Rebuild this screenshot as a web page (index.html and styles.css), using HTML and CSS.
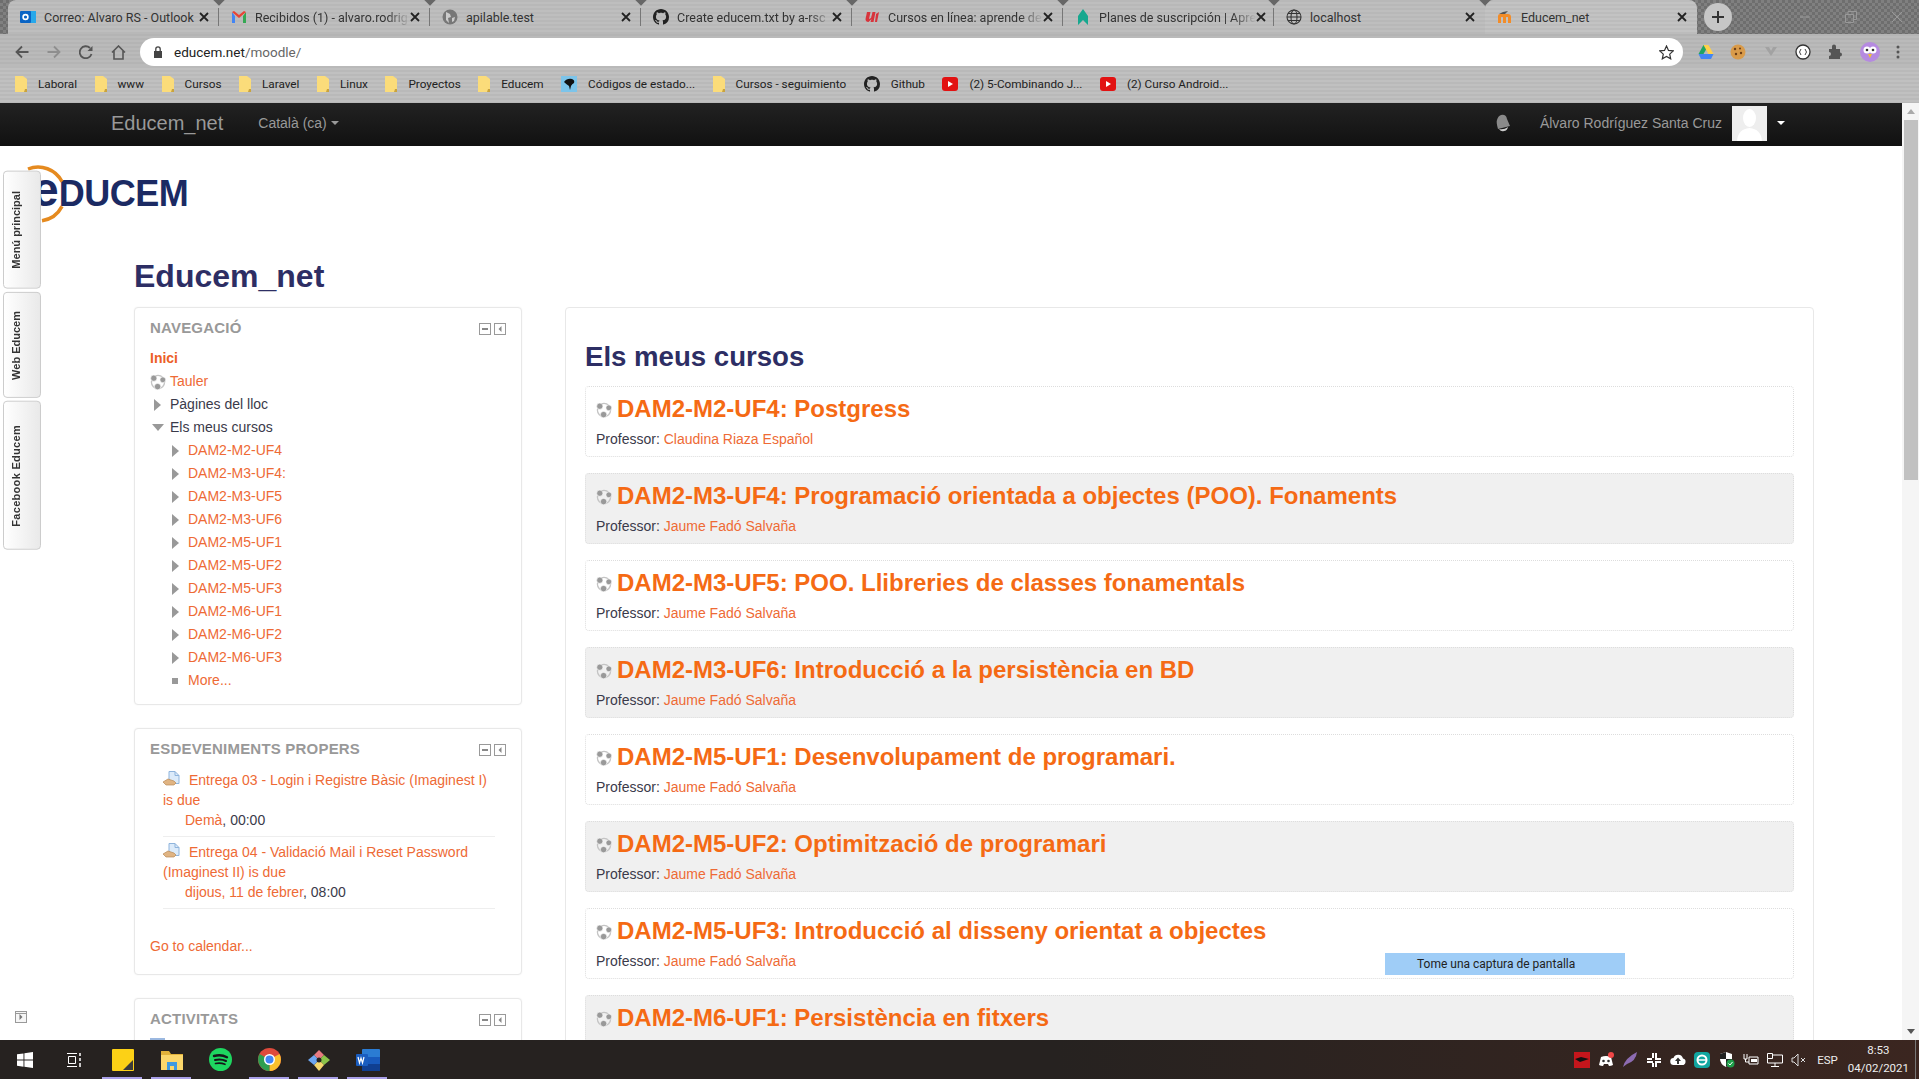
FILE: index.html
```html
<!DOCTYPE html>
<html>
<head>
    <meta charset="UTF-8">
    <title>Educem_net</title>
    <link rel="stylesheet" href="styles.css">
</head>
<body>
    <!-- shared icons -->
    <svg class="defs">
        <symbol id="i-folder" viewBox="0 0 12 16"><path d="M0 0h8l4 3v13H0z" fill="#fbdc7a"/><path d="M10 13h2v3h-3z" fill="#c9a33e"/></symbol>
        <symbol id="i-course" viewBox="0 0 16 16"><circle cx="8" cy="8" r="6.600" fill="none" stroke="#c4c4c4" stroke-width="1.300"/><g fill="#999" stroke="#fff" stroke-width=".6"><circle cx="3.800" cy="4.200" r="3.100"/><circle cx="12.800" cy="5.800" r="2.900"/><circle cx="7.600" cy="12.600" r="3.200"/></g></symbol>
        <symbol id="i-close" viewBox="0 0 10 10"><path d="M1 1l8 8M9 1l-8 8" stroke="#222" stroke-width="1.8"/></symbol>
        <symbol id="i-min" viewBox="0 0 12 12"><rect x=".5" y=".5" width="11" height="11" fill="#fff" stroke="#999"/><rect x="3" y="5" width="6" height="2" fill="#888"/></symbol>
        <symbol id="i-dock" viewBox="0 0 12 12"><rect x=".5" y=".5" width="11" height="11" fill="#fff" stroke="#999"/><path d="M7.5 3L4.5 6l3 3z" fill="#888"/></symbol>
        <symbol id="i-assign" viewBox="0 0 18 16"><path d="M6 .5h6l4 4v8H6z" fill="#dcebfa" stroke="#8fb4dc"/><path d="M12 .5v4h4" fill="none" stroke="#8fb4dc"/><path d="M0 11l5-3 6 2 2 2-2 2H3z" fill="#e0b483" stroke="#b98a58" stroke-width=".7"/></symbol>
        <symbol id="i-yt" viewBox="0 0 16 14"><rect width="16" height="14" rx="3" fill="#e21212"/><path d="M6 4l5 3-5 3z" fill="#fff"/></symbol>
        <symbol id="i-github" viewBox="0 0 16 16"><path fill="#222" d="M8 0C3.58 0 0 3.58 0 8c0 3.54 2.29 6.53 5.47 7.59.4.07.55-.17.55-.38 0-.19-.01-.82-.01-1.49-2.01.37-2.53-.49-2.69-.94-.09-.23-.48-.94-.82-1.13-.28-.15-.68-.52-.01-.53.63-.01 1.08.58 1.23.82.72 1.21 1.87.87 2.33.66.07-.52.28-.87.51-1.07-1.78-.2-3.64-.89-3.64-3.95 0-.87.31-1.59.82-2.15-.08-.2-.36-1.02.08-2.12 0 0 .67-.21 2.2.82.64-.18 1.32-.27 2-.27.68 0 1.36.09 2 .27 1.53-1.04 2.2-.82 2.2-.82.44 1.1.16 1.92.08 2.12.51.56.82 1.27.82 2.15 0 3.07-1.87 3.75-3.65 3.95.29.25.54.73.54 1.48 0 1.07-.01 1.93-.01 2.2 0 .21.15.46.55.38A8.013 8.013 0 0016 8c0-4.42-3.58-8-8-8z"/></symbol>
    </svg>

    <div class="tabstrip">
        <div class="tab">
            <svg class="favicon" viewBox="0 0 16 16"><rect x="5" y="2" width="11" height="12" fill="#28a8ea"/><rect y="2" width="11" height="12" rx="1" fill="#0a64c4"/><circle cx="5.5" cy="8" r="2.4" fill="none" stroke="#fff" stroke-width="1.6"/></svg>
            <span class="tab-title">Correo: Alvaro RS - Outlook</span>
            <svg class="tab-x"><use href="#i-close"/></svg>
        </div>
        <div class="tab">
            <svg class="favicon" viewBox="0 0 16 16"><path d="M1 3v11h3V7z" fill="#4285f4"/><path d="M15 3v11h-3V7z" fill="#34a853"/><path d="M1 3l7 6 7-6-2-1-5 4-5-4z" fill="#ea4335"/></svg>
            <span class="tab-title tab-fade">Recibidos (1) - alvaro.rodrig</span>
            <svg class="tab-x"><use href="#i-close"/></svg>
        </div>
        <div class="tab">
            <svg class="favicon" viewBox="0 0 16 16"><circle cx="8" cy="8" r="7.5" fill="#777"/><path d="M4 3l4 2 1 3-3 1 1 5-3-3zM10 9l3-1-1 4-2 1z" fill="#ccc"/></svg>
            <span class="tab-title">apilable.test</span>
            <svg class="tab-x"><use href="#i-close"/></svg>
        </div>
        <div class="tab">
            <svg class="favicon"><use href="#i-github"/></svg>
            <span class="tab-title tab-fade">Create educem.txt by a-rsc</span>
            <svg class="tab-x"><use href="#i-close"/></svg>
        </div>
        <div class="tab">
            <svg class="favicon" viewBox="0 0 16 16"><path d="M3 3L1.500 10q0 3 3 3l3-3-1 3h3l2-10-3 0-1.500 6-2 1 1.500-7zM12 5l3-2-2 10h-2z" fill="#d8343c"/></svg>
            <span class="tab-title tab-fade">Cursos en línea: aprende de</span>
            <svg class="tab-x"><use href="#i-close"/></svg>
        </div>
        <div class="tab">
            <svg class="favicon" viewBox="0 0 16 16"><path d="M8 0l5 7v9l-5-5-5 5V7z" fill="#17a88f"/></svg>
            <span class="tab-title tab-fade">Planes de suscripción | Apre</span>
            <svg class="tab-x"><use href="#i-close"/></svg>
        </div>
        <div class="tab">
            <svg class="favicon" viewBox="0 0 16 16"><g fill="none" stroke="#333" stroke-width="1.100"><circle cx="8" cy="8" r="7"/><ellipse cx="8" cy="8" rx="3" ry="7"/><path d="M1 8h14M2 4.500h12M2 11.500h12"/></g></svg>
            <span class="tab-title">localhost</span>
            <svg class="tab-x"><use href="#i-close"/></svg>
        </div>
        <div class="tab tab-active">
            <svg class="favicon" viewBox="0 0 16 16"><path d="M1 14V7q0-2 2-2h8q3 0 3 3v6h-3V8h-2v6H6V8H4v6z" fill="#f28c28"/><path d="M6 3l5-1-3 3-6 0z" fill="#555"/></svg>
            <span class="tab-title">Educem_net</span>
            <svg class="tab-x"><use href="#i-close"/></svg>
        </div>
        <div class="newtab">
            <svg width="14" height="14" viewBox="0 0 14 14"><path d="M7 1v12M1 7h12" stroke="#333" stroke-width="2"/></svg>
        </div>
        <div class="winctl">
            <svg width="12" height="12" viewBox="0 0 12 12"><path d="M1 6h10" stroke="#999"/></svg>
            <svg width="12" height="12" viewBox="0 0 12 12"><path d="M.5 3.500h8v8h-8zM3 3.500V.5h8.500v8H8.500" fill="none" stroke="#999"/></svg>
            <svg width="12" height="12" viewBox="0 0 12 12"><path d="M1 1l10 10M11 1L1 11" stroke="#999"/></svg>
        </div>
    </div>

    <div class="toolbar">
        <div class="nav-buttons">
            <svg width="14" height="14" viewBox="0 0 14 14"><path d="M13.500 7H1.500M7 1.500L1.500 7 7 12.500" fill="none" stroke="#555" stroke-width="1.800"/></svg>
            <svg width="14" height="14" viewBox="0 0 14 14"><path d="M.5 7h12M7 1.500L12.500 7 7 12.500" fill="none" stroke="#8e8e8e" stroke-width="1.800"/></svg>
            <svg width="14" height="14" viewBox="0 0 14 14"><path d="M12.500 9A6 6 0 1 1 11 3" fill="none" stroke="#555" stroke-width="1.800"/><path d="M13.500 1v5h-5z" fill="#555"/></svg>
            <svg width="15" height="15" viewBox="0 0 15 15"><path d="M1 7.500L7.500 1 14 7.500M3 6v8h9V6" fill="none" stroke="#555" stroke-width="1.600"/></svg>
        </div>
        <div class="omnibox">
            <svg width="10" height="12" viewBox="0 0 10 12"><path d="M1 5h8v7H1z" fill="#444"/><path d="M2.800 5V3a2.200 2.200 0 0 1 4.400 0v2" fill="none" stroke="#444" stroke-width="1.300"/></svg>
            <span class="url">educem.net<span class="url-path">/moodle/</span></span>
            <svg class="star" width="15" height="15" viewBox="0 0 15 15"><path d="M7.500 1l2 4.400 4.800.5-3.600 3.200 1 4.700-4.200-2.400-4.200 2.400 1-4.700L.7 5.900l4.800-.5z" fill="none" stroke="#333" stroke-width="1.200"/></svg>
        </div>
        <div class="extensions">
            <svg width="16" height="16" viewBox="0 0 16 16"><path d="M5.500 1h5l-5 9H.5z" fill="#1fa463"/><path d="M10.500 1l5 9h-5l-5-9z" fill="#ffd04b"/><path d="M.5 10h15l-2.500 5H3z" fill="#4285f4"/></svg>
            <svg width="16" height="16" viewBox="0 0 16 16"><circle cx="8" cy="8" r="7.500" fill="#d99b4a"/><g fill="#6b3d17"><circle cx="5" cy="5" r="1.200"/><circle cx="10" cy="4.500" r="1"/><circle cx="11" cy="9" r="1.200"/><circle cx="6" cy="10" r="1.200"/></g></svg>
            <svg width="16" height="16" viewBox="0 0 16 16"><path d="M2 3h4l2 4 2-4h4l-6 9z" fill="#a2a2a2"/></svg>
            <svg width="16" height="16" viewBox="0 0 16 16"><circle cx="8" cy="8" r="7" fill="#fff" stroke="#333" stroke-width="1.300"/><path d="M6 5L4.500 8 6 11M10 5l1.500 3L10 11" fill="none" stroke="#444"/></svg>
            <svg width="16" height="16" viewBox="0 0 16 16"><path d="M2 5h3V2.500a2 2 0 0 1 4 0V5h4v3.500a2 2 0 0 1 0 4V15H2v-3a2 2 0 0 0 0-4z" fill="#555"/></svg>
            <svg width="20" height="20" viewBox="0 0 20 20"><circle cx="10" cy="10" r="10" fill="#b58ae0"/><circle cx="7" cy="8" r="3.500" fill="#fff"/><circle cx="13" cy="8" r="3.500" fill="#fff"/><circle cx="7" cy="8" r="1.300" fill="#333"/><circle cx="13" cy="8" r="1.300" fill="#333"/><path d="M8 12h4l-2 4z" fill="#f2c230"/></svg>
            <svg width="4" height="14" viewBox="0 0 4 14"><g fill="#555"><circle cx="2" cy="2" r="1.500"/><circle cx="2" cy="7" r="1.500"/><circle cx="2" cy="12" r="1.500"/></g></svg>
        </div>
    </div>

    <div class="bookmarks">
        <a class="bm"><svg class="bm-icon"><use href="#i-folder"/></svg>Laboral</a>
        <a class="bm"><svg class="bm-icon"><use href="#i-folder"/></svg>www</a>
        <a class="bm"><svg class="bm-icon"><use href="#i-folder"/></svg>Cursos</a>
        <a class="bm"><svg class="bm-icon"><use href="#i-folder"/></svg>Laravel</a>
        <a class="bm"><svg class="bm-icon"><use href="#i-folder"/></svg>Linux</a>
        <a class="bm"><svg class="bm-icon"><use href="#i-folder"/></svg>Proyectos</a>
        <a class="bm"><svg class="bm-icon"><use href="#i-folder"/></svg>Educem</a>
        <a class="bm"><svg class="bm-icon-lg" viewBox="0 0 16 16"><rect width="16" height="16" fill="#7cc4ea"/><path d="M3 6q3-4 8-3 3 1 2 4-2 1-3 3l-1 4-1-4Q5 8 3 6z" fill="#111"/></svg>Códigos de estado...</a>
        <a class="bm"><svg class="bm-icon"><use href="#i-folder"/></svg>Cursos - seguimiento</a>
        <a class="bm"><svg class="bm-icon-lg"><use href="#i-github"/></svg>Github</a>
        <a class="bm"><svg class="bm-icon-lg"><use href="#i-yt"/></svg>(2) 5-Combinando J...</a>
        <a class="bm"><svg class="bm-icon-lg"><use href="#i-yt"/></svg>(2) Curso Android...</a>
    </div>

    <div class="viewport">
        <div class="page">
            <div class="navbar">
                <a class="brand">Educem_net</a>
                <a class="lang">Català (ca)<i class="caret"></i></a>
                <div class="usermenu">
                    <svg width="15" height="18" viewBox="0 0 15 18"><path d="M5 1q5-1 6 4l3 7-12 3Q0 8 1 6q1-4 4-5z" fill="#8a8a8a"/><path d="M3 15q5 1 9-2-1 4-4 4-3 1-5-2z" fill="#ccc"/></svg>
                    <span class="username">Álvaro Rodríguez Santa Cruz</span>
                    <svg class="avatar" viewBox="0 0 35 35"><rect width="35" height="35" fill="#eee"/><ellipse cx="17.500" cy="12" rx="6.500" ry="9" fill="#fff"/><path d="M5 35q1-12 12.500-13Q29 23 30 35z" fill="#fff"/></svg>
                    <i class="caret caret-white"></i>
                </div>
            </div>

            <div class="page-body">
                <div class="dock">
                    <div class="dock-tab">Menú principal</div>
                    <div class="dock-tab dock-web">Web Educem</div>
                    <div class="dock-tab dock-fb">Facebook Educem</div>
                </div>
                <svg class="dock-toggle" viewBox="0 0 12 12"><rect x=".5" y=".5" width="11" height="11" fill="#f6f6f6" stroke="#999"/><path d="M4.500 3l3 3-3 3z" fill="#777"/><path d="M1 2.500h10" stroke="#999"/></svg>

                <div class="logo">
                    <svg class="logo-arc" viewBox="0 0 60 60"><path d="M20 5A27 27 0 0 1 54 17.600M54 42.400A27 27 0 0 1 34 56.700" fill="none" stroke="#e58a1f" stroke-width="3.500"/></svg>
                    <span class="logo-e">e</span><span class="logo-rest">DUCEM</span>
                </div>

                <div class="content">
                    <h1 class="site-title">Educem_net</h1>
                    <div class="columns">
                        <div class="sidebar">
                            <div class="block">
                                <div class="block-head">
                                    <span class="block-title">Navegació</span>
                                    <svg class="ctl"><use href="#i-min"/></svg><svg class="ctl"><use href="#i-dock"/></svg>
                                </div>
                                <ul class="tree">
                                    <li class="tree-home"><a>Inici</a></li>
                                    <li><svg class="tree-icon"><use href="#i-course"/></svg><a>Tauler</a></li>
                                    <li><i class="tri"></i><span>Pàgines del lloc</span></li>
                                    <li><i class="tri tri-open"></i><span>Els meus cursos</span></li>
                                    <li class="sub"><i class="tri"></i><a>DAM2-M2-UF4</a></li>
                                    <li class="sub"><i class="tri"></i><a>DAM2-M3-UF4:</a></li>
                                    <li class="sub"><i class="tri"></i><a>DAM2-M3-UF5</a></li>
                                    <li class="sub"><i class="tri"></i><a>DAM2-M3-UF6</a></li>
                                    <li class="sub"><i class="tri"></i><a>DAM2-M5-UF1</a></li>
                                    <li class="sub"><i class="tri"></i><a>DAM2-M5-UF2</a></li>
                                    <li class="sub"><i class="tri"></i><a>DAM2-M5-UF3</a></li>
                                    <li class="sub"><i class="tri"></i><a>DAM2-M6-UF1</a></li>
                                    <li class="sub"><i class="tri"></i><a>DAM2-M6-UF2</a></li>
                                    <li class="sub"><i class="tri"></i><a>DAM2-M6-UF3</a></li>
                                    <li class="sub"><i class="square"></i><a>More...</a></li>
                                </ul>
                            </div>

                            <div class="block">
                                <div class="block-head">
                                    <span class="block-title">Esdeveniments propers</span>
                                    <svg class="ctl"><use href="#i-min"/></svg><svg class="ctl"><use href="#i-dock"/></svg>
                                </div>
                                <div class="events">
                                    <div class="event">
                                        <a><svg class="event-icon"><use href="#i-assign"/></svg>Entrega 03 - Login i Registre Bàsic (Imaginest I) is due</a>
                                        <div class="event-date"><a>Demà</a><a class="comma">,</a> 00:00</div>
                                    </div>
                                    <div class="event">
                                        <a><svg class="event-icon"><use href="#i-assign"/></svg>Entrega 04 - Validació Mail i Reset Password (Imaginest II) is due</a>
                                        <div class="event-date"><a>dijous, 11 de febrer</a><a class="comma">,</a> 08:00</div>
                                    </div>
                                </div>
                                <a class="calendar-link">Go to calendar...</a>
                            </div>

                            <div class="block">
                                <div class="block-head">
                                    <span class="block-title">Activitats</span>
                                    <svg class="ctl"><use href="#i-min"/></svg><svg class="ctl"><use href="#i-dock"/></svg>
                                </div>
                                <div class="activity-icon"></div>
                            </div>
                        </div>

                        <div class="main-block">
                            <h2 class="main-title">Els meus cursos</h2>
                            <div class="course">
                                <h3 class="course-name"><svg class="course-icon"><use href="#i-course"/></svg><a>DAM2-M2-UF4: Postgress</a></h3>
                                <div class="teacher">Professor: <a>Claudina Riaza Español</a></div>
                            </div>
                            <div class="course">
                                <h3 class="course-name"><svg class="course-icon"><use href="#i-course"/></svg><a>DAM2-M3-UF4: Programació orientada a objectes (POO). Fonaments</a></h3>
                                <div class="teacher">Professor: <a>Jaume Fadó Salvaña</a></div>
                            </div>
                            <div class="course">
                                <h3 class="course-name"><svg class="course-icon"><use href="#i-course"/></svg><a>DAM2-M3-UF5: POO. Llibreries de classes fonamentals</a></h3>
                                <div class="teacher">Professor: <a>Jaume Fadó Salvaña</a></div>
                            </div>
                            <div class="course">
                                <h3 class="course-name"><svg class="course-icon"><use href="#i-course"/></svg><a>DAM2-M3-UF6: Introducció a la persistència en BD</a></h3>
                                <div class="teacher">Professor: <a>Jaume Fadó Salvaña</a></div>
                            </div>
                            <div class="course">
                                <h3 class="course-name"><svg class="course-icon"><use href="#i-course"/></svg><a>DAM2-M5-UF1: Desenvolupament de programari.</a></h3>
                                <div class="teacher">Professor: <a>Jaume Fadó Salvaña</a></div>
                            </div>
                            <div class="course">
                                <h3 class="course-name"><svg class="course-icon"><use href="#i-course"/></svg><a>DAM2-M5-UF2: Optimització de programari</a></h3>
                                <div class="teacher">Professor: <a>Jaume Fadó Salvaña</a></div>
                            </div>
                            <div class="course">
                                <h3 class="course-name"><svg class="course-icon"><use href="#i-course"/></svg><a>DAM2-M5-UF3: Introducció al disseny orientat a objectes</a></h3>
                                <div class="teacher">Professor: <a>Jaume Fadó Salvaña</a></div>
                            </div>
                            <div class="course">
                                <h3 class="course-name"><svg class="course-icon"><use href="#i-course"/></svg><a>DAM2-M6-UF1: Persistència en fitxers</a></h3>
                            </div>
                        </div>
                    </div>
                </div>
                <div class="tooltip">Tome una captura de pantalla</div>
            </div>
        </div>
        <div class="scrollbar">
            <i class="arrow-up"></i>
            <div class="thumb"></div>
            <i class="arrow-down"></i>
        </div>
    </div>

    <div class="taskbar">
        <div class="task-btn"><svg width="16" height="16" viewBox="0 0 16 16"><path d="M0 2.300l6.500-.9v6.200H0zM7.400 1.300L16 0v7.600H7.400zM0 8.500h6.500v6.200L0 13.800zM7.400 8.500H16V16l-8.600-1.200z" fill="#fff"/></svg></div>
        <div class="task-btn"><svg width="16" height="16" viewBox="0 0 16 16"><g fill="none" stroke="#fff"><path d="M1 1.500h10M1 14.500h10M2.500 4.500h7v7h-7z"/></g><path d="M14 1v3M14 6v3M14 11v4" stroke="#fff" stroke-width="1.500"/></svg></div>
        <div class="task-btn task-open"><svg width="22" height="22" viewBox="0 0 22 22"><rect width="22" height="22" rx="1" fill="#fcd116"/><path d="M21 11v10H11z" fill="#3a3a3a"/></svg></div>
        <div class="task-btn task-open"><svg width="22" height="20" viewBox="0 0 22 20"><path d="M0 1h8l2 3h12v4H0z" fill="#e2b23a"/><path d="M0 5h22v15H0z" fill="#fbd76b"/><path d="M6 12h10v8h-3v-4H9v4H6z" fill="#3f9ae0"/></svg></div>
        <div class="task-btn"><svg width="23" height="23" viewBox="0 0 23 23"><circle cx="11.500" cy="11.500" r="11.500" fill="#1ed760"/><g fill="none" stroke="#16161a" stroke-linecap="round"><path d="M5 8q7-2 13 1.200" stroke-width="2.400"/><path d="M6 12q6-1.500 11 1" stroke-width="2"/><path d="M6.500 15.500q5-1 9.500.8" stroke-width="1.600"/></g></svg></div>
        <div class="task-btn task-open"><svg width="23" height="23" viewBox="0 0 23 23"><circle cx="11.500" cy="11.500" r="11.500" fill="#de4a3c"/><path d="M11.500 11.500L21.500 6A11.500 11.500 0 0 1 11.500 23z" fill="#fbc02d"/><path d="M11.500 11.500V23A11.500 11.500 0 0 1 1.500 6z" fill="#2e9e4f"/><circle cx="11.500" cy="11.500" r="5.500" fill="#fff"/><circle cx="11.500" cy="11.500" r="4" fill="#4285f4"/></svg></div>
        <div class="task-btn task-open"><svg width="24" height="24" viewBox="0 0 24 24"><path d="M12 12L7 7l5-5 5 5z" fill="#e87a80"/><path d="M12 12l5-5 6 5-6 5z" fill="#8bc34a"/><path d="M12 12l5 5-5 6-5-6z" fill="#f5d76e"/><path d="M12 12l-5 5-6-5 6-5z" fill="#6ea6f0"/><circle cx="12" cy="12" r="2.500" fill="#222"/></svg></div>
        <div class="task-btn task-open"><svg width="24" height="22" viewBox="0 0 24 22"><rect x="6" width="18" height="22" rx="1" fill="#2b7cd3"/><rect x="6" y="15" width="18" height="7" fill="#103f91"/><rect x="6" y="8" width="18" height="7" fill="#185abd"/><rect y="5" width="12" height="12" rx="1" fill="#1a5dbf"/><path d="M2 8l1.500 6L5 9l1.500 5L8 8" fill="none" stroke="#fff" stroke-width="1.200"/></svg></div>

        <div class="tray">
            <svg width="16" height="16" viewBox="0 0 16 16"><rect width="16" height="16" fill="#c4161c"/><path d="M1 7l6-2 8 2-6 2-3 1z" fill="#111"/></svg>
            <svg width="16" height="16" viewBox="0 0 16 16"><path d="M1 13L3 5q5-2 10 0l2 8q-2 1-4 1l-1-2H6l-1 2q-2 0-4-1z" fill="#fff"/><circle cx="5.500" cy="9" r="1.300" fill="#333"/><circle cx="10.500" cy="9" r="1.300" fill="#333"/><circle cx="13" cy="3" r="3" fill="#f04747"/></svg>
            <svg width="16" height="16" viewBox="0 0 16 16"><path d="M1 15Q3 6 15 0q-1 9-10 12z" fill="#8c6bb1"/></svg>
            <svg width="16" height="16" viewBox="0 0 16 16"><g fill="#fff"><rect x="6" y="1" width="2" height="5"/><rect x="1" y="6" width="5" height="2"/><rect x="9" y="1" width="2" height="5"/><rect x="9" y="6" width="6" height="2"/><rect x="1" y="9" width="6" height="2"/><rect x="6" y="11" width="2" height="4"/><rect x="9" y="9" width="2" height="6"/><rect x="11" y="9" width="4" height="2"/></g></svg>
            <svg width="16" height="14" viewBox="0 0 16 14"><path d="M4 12a3.500 3.500 0 0 1-.5-7A5 5 0 0 1 13 5.500a3.300 3.300 0 0 1-1 6.500z" fill="#fff"/><path d="M8 4.500L5 8h2v3h2V8h2z" fill="#333"/></svg>
            <svg width="16" height="16" viewBox="0 0 16 16"><rect width="16" height="16" rx="4" fill="#11a6a0"/><circle cx="8" cy="8" r="4.500" fill="none" stroke="#fff" stroke-width="2"/><path d="M4 8h8" stroke="#fff" stroke-width="1.500"/></svg>
            <svg width="17" height="17" viewBox="0 0 17 17"><path d="M8 1l6 2v5q0 5-6 8-6-3-6-8V3z" fill="#fff"/><path d="M8 1v7H2V3zM8 8h6q0 5-6 8z" fill="#222"/><circle cx="12.500" cy="12.500" r="4" fill="#1e9e4a"/><path d="M10.500 12.500l1.500 1.500 2.500-3" fill="none" stroke="#fff"/></svg>
            <svg width="16" height="14" viewBox="0 0 16 14"><path d="M6 4h9v7H6z" fill="none" stroke="#fff"/><rect x="8" y="6" width="6" height="3" fill="#fff"/><path d="M1 2v4h3V2M2.500 6v3H6M1 1v1M4 1v1" fill="none" stroke="#fff"/></svg>
            <svg width="16" height="16" viewBox="0 0 16 16"><path d="M.5 1.500h5v5h-5zM5.500 3h10v8H.5V6.500M8 11v3M4 14.500h8" fill="none" stroke="#fff"/></svg>
            <svg width="16" height="14" viewBox="0 0 16 14"><path d="M1 5h2l4-4v12L3 9H1z" fill="none" stroke="#ddd"/><path d="M10 5l4 4M14 5l-4 4" stroke="#ddd"/></svg>
            <span class="tray-lang">ESP</span>
            <div class="clock"><span>8:53</span><span>04/02/2021</span></div>
            <div class="show-desktop"></div>
        </div>
    </div>
</body>
</html>
```

FILE: styles.css
```css
* {
  box-sizing: border-box;
}
html, body {
  margin: 0;
  height: 100%;
  overflow: hidden;
}
body {
  display: flex;
  flex-direction: column;
  width: 1919px;
  height: 1079px;
  font-family: "Liberation Sans", Arial, sans-serif;
  font-size: 14px;
  color: #3a3a4a;
  background-color: #fff;
}
a {
  color: #ee6a35;
  text-decoration: none;
}
.defs {
  display: none;
}

/* Browser top: tabs */
.tabstrip {
  display: flex;
  align-items: stretch;
  height: 34px;
  padding-left: 8px;
  font-family: Roboto, sans-serif;
  font-size: 12.5px;
  background-color: #6e6e6e;
  background-image:
    linear-gradient(45deg, #808080 25%, transparent 25%, transparent 75%, #808080 75%),
    linear-gradient(45deg, #808080 25%, transparent 25%, transparent 75%, #808080 75%);
  background-size: 6px 6px;
  background-position: 0 0, 3px 3px;
}
.tab {
  position: relative;
  display: flex;
  align-items: center;
  width: 211px;
  padding: 0 10px 0 12px;
  color: #333;
  background: repeating-linear-gradient(#b8b8b8 0 2px, #bebebe 2px 4px);
}
.tab:first-child {
  border-top-left-radius: 8px;
}
.tab::after {
  content: "";
  position: absolute;
  right: 0;
  top: 8px;
  height: 18px;
  border-right: 1px solid #777;
}
.tab::before {
  content: "";
  position: absolute;
  right: -4px;
  top: -4px;
  width: 8px;
  height: 8px;
  z-index: 1;
  background-color: #666;
  transform: rotate(45deg);
}
.tab:nth-child(7)::after, .tab-active::after, .tab-active::before {
  display: none;
}
.tab-active {
  width: 212px;
  border-radius: 8px 8px 0 0;
  background: repeating-linear-gradient(#bcbcbc 0 2px, #c3c3c3 2px 4px);
}
.favicon {
  flex: none;
  width: 16px;
  height: 16px;
  margin-right: 8px;
}
.tab-title {
  flex: 1;
  white-space: nowrap;
}
.tab-fade {
  -webkit-mask-image: linear-gradient(to right, #000 85%, transparent 100%);
  mask-image: linear-gradient(to right, #000 85%, transparent 100%);
}
.tab-x {
  flex: none;
  width: 10px;
  height: 10px;
}
.newtab {
  display: flex;
  align-items: center;
  justify-content: center;
  align-self: center;
  width: 28px;
  height: 28px;
  margin-left: 7px;
  border-radius: 50%;
  background-color: #c6c6c6;
}
.winctl {
  display: flex;
  align-items: center;
  gap: 34px;
  margin-left: auto;
  padding-right: 16px;
}

/* Toolbar with address bar */
.toolbar {
  display: flex;
  align-items: center;
  height: 32px;
  padding-top: 4px;
  background: repeating-linear-gradient(#b4b4b4 0 2px, #bababa 2px 4px);
}
.nav-buttons {
  display: flex;
  align-items: center;
  gap: 18px;
  width: 140px;
  padding-left: 15px;
}
.omnibox {
  display: flex;
  align-items: center;
  gap: 11px;
  width: 1543px;
  height: 28px;
  padding: 0 9px 0 13px;
  border-radius: 14px;
  background-color: #fff;
}
.url {
  flex: 1;
  font-family: Roboto, sans-serif;
  font-size: 13.5px;
  color: #222;
}
.url-path {
  color: #666;
}
.extensions {
  display: flex;
  align-items: center;
  justify-content: space-between;
  flex: 1;
  padding: 0 19px 0 15px;
}

/* Bookmarks */
.bookmarks {
  display: flex;
  align-items: center;
  gap: 17.5px;
  height: 37px;
  padding: 0 0 2px 15px;
  font-family: Roboto, sans-serif;
  font-size: 11.75px;
  background: repeating-linear-gradient(#b9b9b9 0 2px, #c0c0c0 2px 4px);
}
.bm {
  display: flex;
  align-items: center;
  gap: 11px;
  color: #222;
  white-space: nowrap;
}
.bm-icon {
  width: 12px;
  height: 16px;
}
.bm-icon-lg {
  width: 16px;
  height: 16px;
}

/* Viewport */
.viewport {
  flex: 1;
  display: flex;
  min-height: 0;
}
.page {
  flex: 1;
  display: flex;
  flex-direction: column;
  min-width: 0;
}
.scrollbar {
  position: relative;
  flex: none;
  width: 17px;
  padding: 17px 1px 0 2px;
  background-color: #f5f5f5;
}
.thumb {
  height: 360px;
  background-color: #c1c1c1;
}
.arrow-up, .arrow-down {
  position: absolute;
  left: 5px;
  border-left: 4px solid transparent;
  border-right: 4px solid transparent;
}
.arrow-up {
  top: 6px;
  border-bottom: 5px solid #aaa;
}
.arrow-down {
  bottom: 6px;
  border-top: 5px solid #555;
}

/* Moodle navbar */
.navbar {
  flex: none;
  display: flex;
  align-items: center;
  height: 43px;
  padding: 0 0 3px 111px;
  color: #999;
  background: linear-gradient(#222, #111);
}
.brand {
  font-size: 20px;
  color: #999;
}
.lang {
  display: flex;
  align-items: center;
  margin-left: 35px;
  color: #999;
}
.caret {
  display: inline-block;
  margin-left: 4px;
  border-left: 4px solid transparent;
  border-right: 4px solid transparent;
  border-top: 4px solid #999;
}
.caret-white {
  margin-left: 10px;
  border-top-color: #fff;
}
.usermenu {
  display: flex;
  align-items: center;
  margin-left: auto;
  padding-right: 117px;
}
.username {
  margin: 0 10px 0 29px;
}
.avatar {
  width: 35px;
  height: 35px;
}

/* Page body */
.page-body {
  position: relative;
  flex: 1;
  min-height: 0;
  overflow: hidden;
  padding-right: 88px;
}
.dock {
  position: absolute;
  z-index: 2;
  left: 3px;
  top: 25px;
  display: flex;
  flex-direction: column;
  gap: 3px;
}
.dock-tab {
  width: 38px;
  padding: 19px 0 19px 13px;
  border: 1px solid #ccc;
  border-radius: 4px;
  font-size: 11px;
  font-weight: bold;
  line-height: 24px;
  color: #333;
  writing-mode: vertical-rl;
  transform: rotate(180deg);
  background: linear-gradient(to left, #fff, #e9e9e9);
}
.dock-web {
  padding-top: 17px;
  padding-bottom: 18px;
}
.dock-fb {
  padding-top: 22px;
  padding-bottom: 23px;
  letter-spacing: 0.3px;
}
.dock-toggle {
  position: absolute;
  left: 15px;
  top: 865px;
  width: 12px;
  height: 12px;
}
.logo {
  position: relative;
  display: flex;
  align-items: baseline;
  height: 110px;
  padding: 20px 0 0 32px;
  line-height: 1;
  font-weight: bold;
  color: #1b2a63;
}
.logo-arc {
  position: absolute;
  left: 8px;
  top: 18px;
  width: 60px;
  height: 60px;
}
.logo-e {
  font-size: 48px;
}
.logo-rest {
  font-size: 36px;
  letter-spacing: -0.5px;
}
.content {
  margin-left: 134px;
}
.site-title {
  margin: 0 0 11px;
  font-size: 32px;
  line-height: 40px;
  color: #2d2e64;
}
.columns {
  display: flex;
  gap: 43px;
  align-items: flex-start;
}

/* Blocks */
.sidebar {
  flex: none;
  display: flex;
  flex-direction: column;
  gap: 23px;
  width: 388px;
}
.block {
  padding: 9px 15px 12px;
  border: 1px solid #e8e8e8;
  border-radius: 4px;
  background-color: #fff;
  box-shadow: 0 0 2px rgba(0, 0, 0, 0.05);
}
.block-head {
  display: flex;
  align-items: center;
  gap: 3px;
  height: 20px;
}
.block-title {
  flex: 1;
  font-size: 15px;
  font-weight: bold;
  letter-spacing: 0.2px;
  text-transform: uppercase;
  color: #999;
}
.ctl {
  width: 12px;
  height: 12px;
  margin-top: 3px;
}
.tree {
  margin: 10px 0 0;
  padding: 0;
  list-style: none;
  line-height: 23px;
}
.tree li {
  display: flex;
  align-items: center;
  height: 23px;
}
.tree-home a {
  font-weight: bold;
  color: #ec5f27;
}
.tree-icon {
  width: 16px;
  height: 16px;
  margin-right: 4px;
}
.tri {
  width: 0;
  margin: 0 9px 0 4px;
  border-left: 7px solid #999;
  border-top: 6px solid transparent;
  border-bottom: 6px solid transparent;
}
.tri-open {
  margin: 0 6px 0 2px;
  border-top: 7px solid #999;
  border-left: 6px solid transparent;
  border-right: 6px solid transparent;
  border-bottom: 0;
}
.sub {
  padding-left: 18px;
}
.square {
  width: 6px;
  height: 6px;
  margin: 0 10px 0 4px;
  background-color: #999;
}
.events {
  width: 332px;
  margin: 12px 0 0 13px;
  line-height: 20px;
}
.event {
  padding: 0 0 6px;
  margin-bottom: 5px;
  border-bottom: 1px solid #eee;
}
.event-icon {
  width: 18px;
  height: 16px;
  margin-right: 8px;
  vertical-align: -2px;
}
.event-date {
  padding-left: 22px;
}
.comma {
  color: #3a3a4a;
}
.calendar-link {
  display: block;
  margin-top: 27px;
  line-height: 20px;
  padding-bottom: 6px;
}
.activity-icon {
  width: 15px;
  height: 15px;
  margin-top: 10px;
  background-color: #9bb8e0;
}

/* Course list */
.main-block {
  flex: 1;
  min-width: 0;
  padding: 29px 19px 20px;
  border: 1px solid #e8e8e8;
  border-radius: 4px;
  background-color: #fff;
}
.main-title {
  margin: 0 0 9px;
  font-size: 27.6px;
  line-height: 40px;
  color: #2d2e64;
}
.course {
  height: 71px;
  margin-bottom: 16px;
  padding: 7px 10px;
  border: 1px dotted #ddd;
  border-radius: 4px;
}
.course:nth-of-type(even) {
  background-color: #f0f0f0;
}
.course-name {
  display: flex;
  align-items: center;
  margin: 0;
  font-size: 24px;
  line-height: 30px;
}
.course-name a {
  color: #f56a14;
}
.course-icon {
  flex: none;
  width: 16px;
  height: 16px;
  margin: 1px 5px 0 0;
}
.teacher {
  margin-top: 5px;
  line-height: 20px;
}
.tooltip {
  position: absolute;
  left: 1385px;
  top: 807px;
  width: 240px;
  height: 22px;
  padding-left: 32px;
  font-family: Roboto, sans-serif;
  font-size: 12px;
  line-height: 22px;
  color: #222;
  background-color: #9fcdf7;
}

/* Windows taskbar */
.taskbar {
  flex: none;
  display: flex;
  align-items: center;
  height: 39px;
  background: linear-gradient(to right, #262220, #262220 55%, #3b2620);
}
.task-btn {
  position: relative;
  display: flex;
  align-items: center;
  justify-content: center;
  width: 49px;
  height: 39px;
}
.task-open::after {
  content: "";
  position: absolute;
  left: 4px;
  right: 5px;
  bottom: 0;
  height: 2px;
  background-color: #a9a0e8;
}
.tray {
  display: flex;
  align-items: center;
  gap: 8px;
  margin-left: auto;
  height: 39px;
  color: #eee;
  font-family: Roboto, sans-serif;
  font-size: 11.5px;
}
.tray-lang {
  margin-left: 2px;
}
.clock {
  display: flex;
  flex-direction: column;
  align-items: center;
  gap: 3px;
  margin-left: 2px;
  line-height: 15px;
}
.show-desktop {
  width: 1px;
  height: 39px;
  margin-left: -2px;
  margin-right: 3px;
  background-color: #777;
}
```
